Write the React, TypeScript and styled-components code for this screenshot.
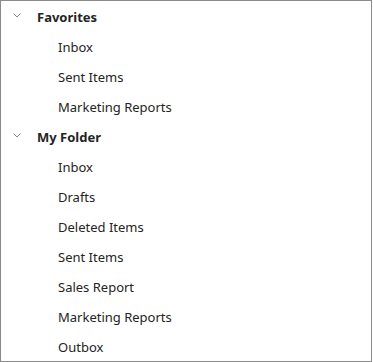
import React from "react";
import styled, { createGlobalStyle } from "styled-components";

const Global = createGlobalStyle`
  html, body { margin: 0; padding: 0; background: #fff; }
  body { font-family: "Segoe UI", "Noto Sans", "Open Sans", sans-serif; }
`;

const Frame = styled.div`
  box-sizing: border-box;
  width: 372px;
  height: 362px;
  border: 1px solid #8a8a8a;
  overflow: hidden;
  background: #fff;
  padding-top: 1px;
`;

const Tree = styled.ul`
  list-style: none;
  margin: 0;
  padding: 0;
`;

const Row = styled.div<{ $level: number }>`
  height: 30px;
  display: flex;
  align-items: center;
  padding-left: ${(p) => (p.$level === 0 ? 12 : 57)}px;
  font-size: 13px;
  color: #242424;
  font-weight: ${(p) => (p.$level === 0 ? 700 : 400)};
  white-space: nowrap;
`;

const Chevron = styled.svg`
  width: 8px;
  height: 5px;
  margin-right: 16px;
  align-self: flex-start;
  margin-top: 11px;
  flex: none;
`;

const groups = [
  { title: "Favorites", items: ["Inbox", "Sent Items", "Marketing Reports"] },
  {
    title: "My Folder",
    items: ["Inbox", "Drafts", "Deleted Items", "Sent Items", "Sales Report", "Marketing Reports", "Outbox"],
  },
];

export default function App() {
  return (
    <>
      <Global />
      <Frame>
        <Tree>
          {groups.map((g) => (
            <li key={g.title}>
              <Row $level={0}>
                <Chevron viewBox="0 0 8 5">
                  <path d="M0.5 0.5 L4 4 L7.5 0.5" fill="none" stroke="#8a8a8a" strokeWidth="1" />
                </Chevron>
                {g.title}
              </Row>
              <Tree>
                {g.items.map((it, i) => (
                  <li key={i}>
                    <Row $level={1}>{it}</Row>
                  </li>
                ))}
              </Tree>
            </li>
          ))}
        </Tree>
      </Frame>
    </>
  );
}
